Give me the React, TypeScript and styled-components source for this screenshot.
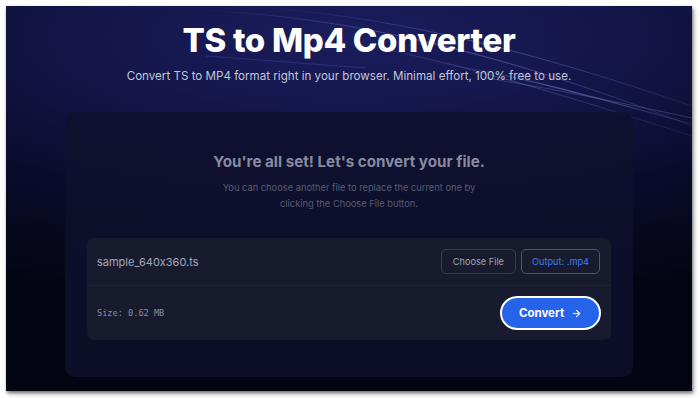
import React from "react";
import styled, { createGlobalStyle } from "styled-components";

const Global = createGlobalStyle`
  html, body { margin: 0; padding: 0; background: #ffffff; }
  body { font-family: Inter, "Noto Sans", sans-serif; font-feature-settings: "calt" 0; }
`;

const Page = styled.div`
  width: 700px;
  height: 398px;
  padding: 6px 8px 7px 6px;
  box-sizing: border-box;
`;

const Window = styled.div`
  position: relative;
  width: 686px;
  height: 385px;
  overflow: hidden;
  background: radial-gradient(ellipse 120% 70% at 50% 8%, #1b1d5e 0%, #131548 35%, #0a0b2a 65%, #040512 100%);
  box-shadow: 1px 2px 3px rgba(0, 0, 0, 0.45), 2px 3px 6px rgba(0, 0, 0, 0.2);
  display: flex;
  flex-direction: column;
  align-items: center;
`;

const Streaks = styled.svg`
  position: absolute;
  inset: 0;
  pointer-events: none;
`;

const Header = styled.header`
  position: relative;
  display: flex;
  flex-direction: column;
  align-items: center;
  padding-top: 14px;
`;

const Title = styled.h1`
  margin: 0;
  font-size: 33px;
  line-height: 40px;
  font-weight: 800;
  color: #ffffff;
  letter-spacing: -0.3px;
`;

const Subtitle = styled.p`
  margin: 8px 0 0;
  font-size: 11.6px;
  line-height: 16px;
  color: #c3c6d8;
`;

const Card = styled.section`
  position: relative;
  margin-top: 28px;
  width: 568px;
  height: 265px;
  box-sizing: border-box;
  border-radius: 10px;
  background: rgba(15, 17, 45, 0.85);
  padding: 39px 22px 0;
  display: flex;
  flex-direction: column;
  align-items: center;
`;

const Heading = styled.h2`
  margin: 0;
  font-size: 15.2px;
  line-height: 22px;
  font-weight: 700;
  color: #868ba0;
`;

const Note = styled.p`
  margin: 7px 0 0;
  width: 280px;
  text-align: center;
  font-size: 9.3px;
  line-height: 16px;
  color: #575c72;
`;

const Panel = styled.div`
  margin-top: 26px;
  width: 100%;
  border-radius: 7px;
  background: #181b2d;
  display: flex;
  flex-direction: column;
`;

const Row = styled.div<{ $tall?: boolean }>`
  display: flex;
  align-items: center;
  justify-content: space-between;
  height: ${(p) => (p.$tall ? "54px" : "47px")};
  padding: 0 11px 0 10px;
  & + & { border-top: 1px solid #1f2336; }
`;

const FileName = styled.span`
  font-size: 11px;
  color: #a4a8ba;
`;

const Size = styled.span`
  font-family: "DejaVu Sans Mono", "Liberation Mono", monospace;
  font-size: 8.6px;
  color: #8a8fa0;
`;

const Actions = styled.div`
  display: flex;
  gap: 5px;
`;

const Outline = styled.button<{ $accent?: boolean }>`
  height: 25px;
  padding: 0 ${(p) => (p.$accent ? "10px" : "11px")};
  border-radius: 5px;
  background: transparent;
  font-family: Inter, "Noto Sans", sans-serif;
  font-size: 9.2px;
  border: 1px solid ${(p) => (p.$accent ? "#2358d0" : "#363b4f")};
  color: ${(p) => (p.$accent ? "#3b7cf0" : "#9ea3b4")};
`;

const Convert = styled.button`
  width: 101px;
  height: 34px;
  border-radius: 17px;
  border: 2px solid #ffffff;
  background: #2563eb;
  color: #ffffff;
  font-family: Inter, "Noto Sans", sans-serif;
  font-size: 11.5px;
  font-weight: 700;
  display: flex;
  align-items: center;
  justify-content: center;
  gap: 7px;
  margin-right: -1px;
`;

export default function App() {
  return (
    <>
      <Global />
      <Page>
        <Window>
          <Streaks width="686" height="385" viewBox="0 0 686 385">
            <defs>
              <linearGradient id="fade" x1="0" y1="0" x2="1" y2="0">
                <stop offset="0" stopColor="#6f86ff" stopOpacity="0" />
                <stop offset="0.5" stopColor="#8aa0ff" stopOpacity="0.45" />
                <stop offset="1" stopColor="#8aa0ff" stopOpacity="0.12" />
              </linearGradient>
            </defs>
            <path d="M190 4 C 330 10, 480 40, 686 120" stroke="url(#fade)" strokeWidth="1" fill="none" />
            <path d="M260 2 C 400 12, 540 50, 686 100" stroke="url(#fade)" strokeWidth="0.8" fill="none" />
            <path d="M300 30 C 420 45, 560 90, 686 130" stroke="url(#fade)" strokeWidth="0.7" fill="none" />
            <path d="M420 55 C 520 70, 600 95, 686 118" stroke="url(#fade)" strokeWidth="1.2" fill="none" />
            <path d="M480 72 C 560 85, 630 100, 686 112" stroke="#9fb0ff" strokeOpacity="0.3" strokeWidth="0.8" fill="none" />
            <path d="M200 50 C 270 55, 330 60, 360 62" stroke="#6f86ff" strokeOpacity="0.2" strokeWidth="1" fill="none" />
          </Streaks>
          <Header>
            <Title>TS to Mp4 Converter</Title>
            <Subtitle>Convert TS to MP4 format right in your browser. Minimal effort, 100% free to use.</Subtitle>
          </Header>
          <Card>
            <Heading>You're all set! Let's convert your file.</Heading>
            <Note>You can choose another file to replace the current one by clicking the Choose File button.</Note>
            <Panel>
              <Row>
                <FileName>sample_640x360.ts</FileName>
                <Actions>
                  <Outline>Choose File</Outline>
                  <Outline $accent>Output: .mp4</Outline>
                </Actions>
              </Row>
              <Row $tall>
                <Size>Size: 0.62 MB</Size>
                <Convert>
                  Convert
                  <svg width="11" height="11" viewBox="0 0 24 24" fill="none" stroke="currentColor" strokeWidth="2.4" strokeLinecap="round" strokeLinejoin="round">
                    <path d="M5 12h14" />
                    <path d="M12 5l7 7-7 7" />
                  </svg>
                </Convert>
              </Row>
            </Panel>
          </Card>
        </Window>
      </Page>
    </>
  );
}
